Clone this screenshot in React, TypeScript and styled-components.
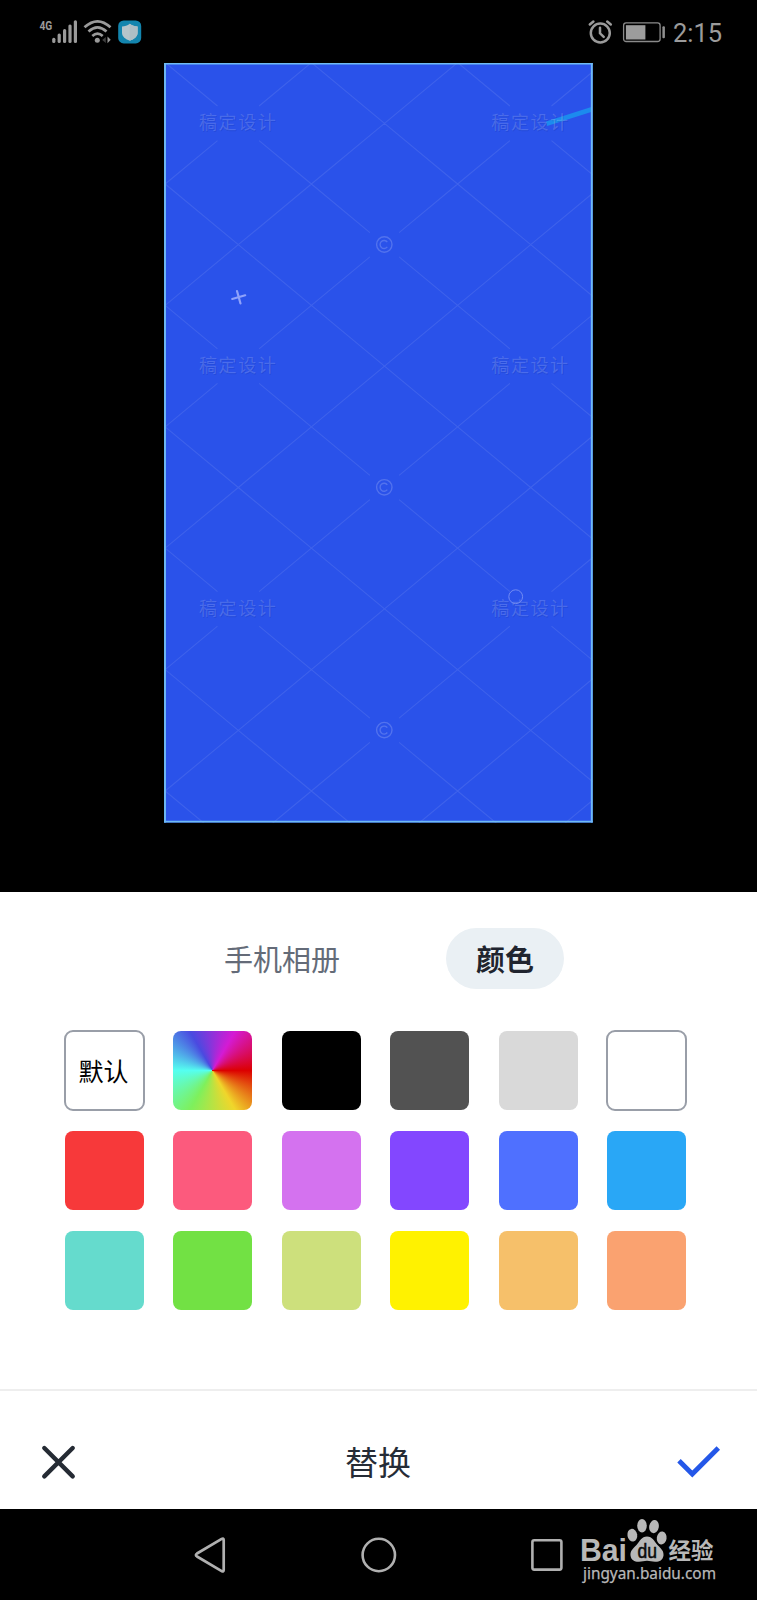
import React from 'react';
import styled, { createGlobalStyle } from 'styled-components';

const GlobalStyle = createGlobalStyle`
  * { box-sizing: border-box; }
  body {
    margin: 0;
    background: #000;
    font-family: Roboto, 'Noto Sans CJK SC', sans-serif;
  }
  button { border: 0; padding: 0; margin: 0; background: none; font-family: inherit; }
  svg { display: block; overflow: visible; }
`;

const Screen = styled.div`
  width: 757px;
  height: 1600px;
  display: flex;
  flex-direction: column;
  background: #000;
  overflow: hidden;
`;

const StatusBar = styled.header`
  height: 63px;
  flex: none;
  display: flex;
  justify-content: space-between;
  align-items: center;
  padding: 0 35px 0 38px;
`;

const StatusGroup = styled.div`
  display: flex;
  align-items: center;
`;

const BatterySlot = styled.span`
  margin-left: 10px;
`;

const Clock = styled.span`
  margin-left: 7px;
  width: 49px;
  font: 400 25.5px/30px Roboto, sans-serif;
  color: #9b9b9b;
  white-space: nowrap;
  padding-top: 2px;
`;

const Stage = styled.main`
  height: 829px;
  flex: none;
  display: flex;
  justify-content: center;
  align-items: flex-start;
`;

const Canvas = styled.div`
  width: 429px;
  height: 760px;
  overflow: hidden;
`;

const Panel = styled.section`
  height: 617px;
  flex: none;
  background: #fff;
  display: flex;
  flex-direction: column;
`;

const Tabs = styled.nav`
  display: flex;
  align-items: center;
  gap: 77px;
  height: 61px;
  margin: 36px 0 0 194px;
`;

const Tab = styled.button<{ $active?: boolean }>`
  height: 61px;
  width: ${p => (p.$active ? 118 : 175)}px;
  padding-top: 5px;
  padding-left: ${p => (p.$active ? 0 : 1)}px;
  border-radius: 31px;
  font-size: 29px;
  line-height: 56px;
  text-align: center;
  white-space: nowrap;
  font-weight: ${p => (p.$active ? 700 : 400)};
  color: ${p => (p.$active ? '#20242e' : '#646b78')};
  background: ${p => (p.$active ? '#eaf0f4' : 'transparent')};
`;

const Palette = styled.div`
  display: grid;
  grid-template-columns: repeat(6, 79px);
  grid-auto-rows: 79px;
  justify-content: space-between;
  row-gap: 21px;
  margin: 42px 71px 0 65px;
`;

const Swatch = styled.button<{ $fill: string; $outlined?: boolean }>`
  margin: ${p => (p.$outlined ? '-1px' : '0')};
  border: ${p => (p.$outlined ? '2px solid #999ea8' : '0')};
  border-radius: ${p => (p.$outlined ? 9 : 8)}px;
  padding: ${p => (p.$outlined ? '4px 2px 0 0' : '0')};
  background: ${p => p.$fill};
  font-size: 25px;
  line-height: 30px;
  color: #000;
  white-space: nowrap;
`;

const ActionBar = styled.footer`
  margin-top: auto;
  height: 120px;
  border-top: 2px solid #eeeeee;
  display: flex;
  align-items: center;
  justify-content: space-between;
  padding: 23px 36px 0 41px;
`;

const Title = styled.h1`
  margin: 0;
  padding: 5px 0 0 3px;
  font-size: 33px;
  line-height: 40px;
  font-weight: 400;
  color: #262c36;
`;

const NavBar = styled.nav`
  height: 91px;
  flex: none;
  position: relative;
  display: flex;
  align-items: center;
  justify-content: space-between;
  padding: 0 193px 0 193px;
`;

const Brand = styled.svg`
  position: absolute;
  left: 575px;
  top: 6px;
`;

const BAR_TOPS = [17.7, 13.5, 9, 4.5, 0.3];

function SignalIcons() {
  return (
    <svg width="106" height="26" viewBox="0 0 106 26" fill="#9a9a9a">
      <text x="1.5" y="11.2" fontFamily="Roboto, sans-serif" fontWeight="700" fontSize="13.5" textLength="12.8" lengthAdjust="spacingAndGlyphs">4G</text>
      {BAR_TOPS.map((top, i) => (
        <rect key={top} x={14.2 + i * 5.4} y={top + 1} width="3.2" height={23 - top} rx="1.5" />
      ))}
      <g fill="none" stroke="#9a9a9a" strokeWidth="2.7">
        <path d="M46.5 8.3Q59.5-3.7 72.5 8.3" />
        <path d="M50.5 12.5Q59.5 4.3 68.5 12.5" />
        <path d="M54.3 17Q59.5 12.3 64.7 17" />
      </g>
      <circle cx="59.3" cy="21.2" r="2.5" />
      <path d="M67.8 18v6l-3.6-3z" fill="#3e3e3e" />
      <path d="M69.5 17.5l3.2 3.2-3.2 3.6z" />
      <rect x="80.2" y="1.4" width="23" height="23" rx="5.5" fill="#1385ae" />
      <path d="M91.8 4.8c2.4 1.800 5 2.500 7.800 2.600v6.300c0 4-3.500 6.400-7.800 8-4.300-1.600-7.800-4-7.800-8V7.400c2.800-.1 5.400-.8 7.800-2.600z" fill="#b7c5cb" />
      <path d="M91.800 4.800c2.400 1.800 5 2.500 7.800 2.600v6.300c0 4-3.500 6.400-7.800 8z" fill="#adbec5" />
    </svg>
  );
}

function AlarmIcon() {
  return (
    <svg width="24" height="26" viewBox="0 0 24 26" fill="none" stroke="#9a9a9a" strokeWidth="2.5" strokeLinecap="round">
      <circle cx="12.300" cy="14" r="9.500" />
      <path d="M12 8.800v5.500l3.700 3.500M1.800 5.500l3.600-3M22.800 5.500l-3.600-3" />
    </svg>
  );
}

function BatteryIcon() {
  return (
    <svg width="44" height="26" viewBox="0 0 44 26">
      <rect x="1.600" y="3.900" width="36.500" height="18.600" rx="2.500" fill="none" stroke="#8a8a8a" strokeWidth="1.300" />
      <rect x="3.900" y="6.200" width="19.500" height="14.300" fill="#9c9c9c" />
      <rect x="40.400" y="7.200" width="2.500" height="12" rx="1" fill="#8f8f8f" />
    </svg>
  );
}

const ORIGIN = { x: 1.2, y: -0.4 };
const STEP = { x: 73.1, y: 60.7 };

// Part of a cell diagonal hidden next to a label or a copyright mark.
const gapAt = (i: number, j: number) => {
  if (i % 4 === 1 && j % 4 === 1) return 0.285;
  if (i % 4 === 3 && j % 4 === 3) return 0.2;
  return 0;
};

function buildLattice() {
  const parts: string[] = [];
  for (let i = 0; i < 6; i++) {
    for (let j = 0; j < 14; j++) {
      if ((i + j) % 2) continue;
      [1, -1].forEach(dir => {
        const a = gapAt(i, j);
        const b = 1 - gapAt(i + 1, j + dir);
        const point = (t: number) =>
          `${(ORIGIN.x + (i + t) * STEP.x).toFixed(1)} ${(ORIGIN.y + (j + dir * t) * STEP.y).toFixed(1)}`;
        parts.push(`M${point(a)}L${point(b)}`);
      });
    }
  }
  return parts.join('');
}

const LATTICE = buildLattice();
const ROWS = [0, 1, 2];

function Artwork() {
  return (
    <svg width="429" height="760" viewBox="0 0 429 760">
      <rect width="428.700" height="759.600" fill="#2a52ea" />
      <path d="M382 58.500L428 43.800V48.800L383 63z" fill="#1c8bee" />
      <path d={LATTICE} fill="none" stroke="#fff" strokeOpacity=".095" strokeWidth="1.100" />
      {ROWS.map(r => (
        <g key={r} transform={`translate(0 ${r * 242.8})`} fontFamily="'Noto Sans CJK SC', sans-serif" fontSize="18" letterSpacing="1.600">
          {[35, 327.3].map(x => (
            <React.Fragment key={x}>
              <text x={x + 0.8} y="67" fill="#001a80" fillOpacity=".15" aria-hidden="true">稿定设计</text>
              <text x={x} y="66.200" fill="#fff" fillOpacity=".17">稿定设计</text>
            </React.Fragment>
          ))}
          <g fill="none" stroke="#fff" strokeOpacity=".19" strokeWidth="1.400">
            <circle cx="220.300" cy="181.500" r="7.700" />
            <path d="M223.300 179.100a4 4 0 1 0 0 4.800" />
          </g>
        </g>
      ))}
      <path d="M68.200 236L81.200 232.300M73 228L76.500 240.500" stroke="#8fa2fa" strokeWidth="2.200" strokeLinecap="round" />
      <circle cx="351.700" cy="533.700" r="6.900" fill="none" stroke="#728bf3" strokeWidth="1" />
      <path d="M1 0V759.600M427.800 0V759.600" stroke="#6fbbf4" strokeWidth="1.900" />
      <path d="M0 .6H428.700M0 758.700H428.700" stroke="#6fbbf4" strokeWidth="1.700" />
    </svg>
  );
}

function CloseIcon() {
  return (
    <svg width="35" height="36" viewBox="0 0 35 36" fill="none" stroke="#252b34" strokeWidth="4.400" strokeLinecap="round">
      <path d="M3.300 4L31.700 32.400M31.700 4L3.300 32.400" />
    </svg>
  );
}

function CheckIcon() {
  return (
    <svg width="44" height="34" viewBox="0 0 44 34" fill="none" stroke="#2457e8" strokeWidth="4.900">
      <path d="M2 15.800L15.300 29L41.300 3" />
    </svg>
  );
}

function BackIcon() {
  return (
    <svg width="34" height="38" viewBox="0 0 34 38" fill="none" stroke="#b0b0b0" strokeWidth="2.700" strokeLinejoin="round">
      <path d="M30.700 4V34Q30.700 36.300 28.700 35.100L4 20.500Q1.800 19 4 17.500L28.700 2.900Q30.700 1.700 30.700 4z" />
    </svg>
  );
}

function HomeIcon() {
  return (
    <svg width="38" height="38" viewBox="0 0 38 38" fill="none" stroke="#b0b0b0" strokeWidth="2.600">
      <circle cx="18.800" cy="19" r="16.200" />
    </svg>
  );
}

function RecentsIcon() {
  return (
    <svg width="34" height="38" viewBox="0 0 34 38" fill="none" stroke="#b0b0b0" strokeWidth="2.600">
      <rect x="2.400" y="4.200" width="29" height="29.400" rx="1.800" />
    </svg>
  );
}

function BrandMark() {
  return (
    <Brand width="150" height="76" viewBox="575 1515 150 76" fill="#b8b8b8">
      <text x="580" y="1561" fontFamily="'Liberation Sans', sans-serif" fontWeight="700" fontSize="30.500" textLength="47" lengthAdjust="spacingAndGlyphs">Bai</text>
      <ellipse cx="632.300" cy="1535.200" rx="4.900" ry="6.400" transform="rotate(-10 632.300 1535.200)" />
      <ellipse cx="642" cy="1525.700" rx="4.800" ry="6.800" />
      <ellipse cx="654" cy="1526.600" rx="4.800" ry="6.600" transform="rotate(10 654 1526.600)" />
      <ellipse cx="661.700" cy="1538" rx="4.900" ry="6.500" transform="rotate(8 661.700 1538)" />
      <path d="M647 1536.500c5.500 0 7 4.500 10.500 8.500 3.500 3.500 6.500 6 6 10.500-.7 5-4.500 6.500-8.500 6.300-3-.2-5-1-8-1s-5 .8-8 1c-4 .2-8-1.500-8.500-6.300-.5-4.500 2.500-7 6-10.500 3.500-4 5-8.500 10.500-8.500z" />
      <text x="637.500" y="1557.500" fill="#0a0a0a" fontFamily="'Liberation Sans', sans-serif" fontSize="19.500" stroke="#0a0a0a" strokeWidth=".5" textLength="19.500" lengthAdjust="spacingAndGlyphs">du</text>
      <text x="668.500" y="1559" fontFamily="'Noto Sans CJK SC', sans-serif" fontWeight="700" fontSize="22.500" textLength="45" lengthAdjust="spacingAndGlyphs">经验</text>
      <text x="583" y="1578.900" fontFamily="'Noto Sans', sans-serif" fontSize="15.500" stroke="#b8b8b8" strokeWidth=".25" textLength="133" lengthAdjust="spacingAndGlyphs">jingyan.baidu.com</text>
    </Brand>
  );
}

const WHEEL =
  'conic-gradient(from 90deg, #dc0000, #f0d62b 60deg, #7ef05c 120deg, #55fff0 180deg, #4a4ae0 240deg, #d41bd4 300deg, #dc0000)';

const SWATCHES: { fill: string; outlined?: boolean; label?: string }[] = [
  { fill: '#fff', outlined: true, label: '默认' },
  { fill: WHEEL },
  { fill: '#000' },
  { fill: '#525252' },
  { fill: '#d9d9d9' },
  { fill: '#fff', outlined: true },
  { fill: '#f7393a' },
  { fill: '#fc5a7d' },
  { fill: '#d472ef' },
  { fill: '#8347ff' },
  { fill: '#4f70ff' },
  { fill: '#29a7f6' },
  { fill: '#65dbcd' },
  { fill: '#72e144' },
  { fill: '#cde07c' },
  { fill: '#fff200' },
  { fill: '#f6c06a' },
  { fill: '#faa270' },
];

export default function App() {
  return (
    <>
      <GlobalStyle />
      <Screen>
        <StatusBar>
          <StatusGroup>
            <SignalIcons />
          </StatusGroup>
          <StatusGroup>
            <AlarmIcon />
            <BatterySlot>
              <BatteryIcon />
            </BatterySlot>
            <Clock>2:15</Clock>
          </StatusGroup>
        </StatusBar>
        <Stage>
          <Canvas>
            <Artwork />
          </Canvas>
        </Stage>
        <Panel>
          <Tabs>
            <Tab>手机相册</Tab>
            <Tab $active>颜色</Tab>
          </Tabs>
          <Palette>
            {SWATCHES.map((s, i) => (
              <Swatch key={i} $fill={s.fill} $outlined={s.outlined}>
                {s.label}
              </Swatch>
            ))}
          </Palette>
          <ActionBar>
            <button aria-label="close"><CloseIcon /></button>
            <Title>替换</Title>
            <button aria-label="confirm"><CheckIcon /></button>
          </ActionBar>
        </Panel>
        <NavBar>
          <BackIcon />
          <HomeIcon />
          <RecentsIcon />
          <BrandMark />
        </NavBar>
      </Screen>
    </>
  );
}
